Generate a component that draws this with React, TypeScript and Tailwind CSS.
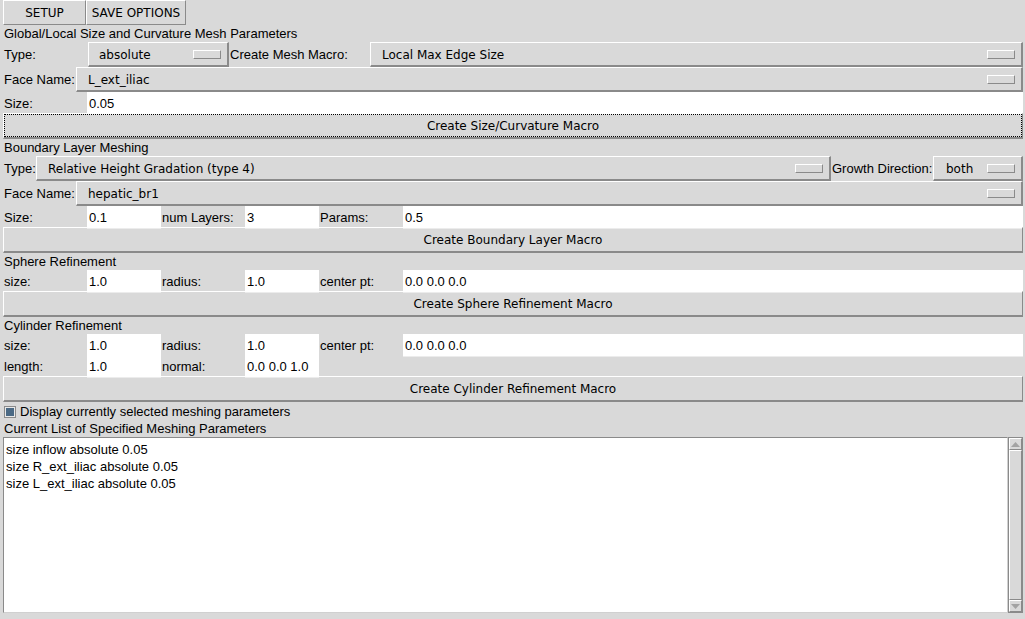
import React from "react";

const SANS = "font-['Liberation_Sans',Arial,sans-serif]";
const DEJAVU = "font-['DejaVu_Sans',sans-serif]";
const RAISED = "border border-t-white border-l-white border-r-[#8a8a8a] border-b-[#8a8a8a]";

function Indicator() {
  return <span className={`ml-auto mr-[6px] h-[9px] w-[28px] shrink-0 ${RAISED}`} />;
}

function MenuButton({ value, className = "", pad = "pl-[11px]" }: { value: string; className?: string; pad?: string }) {
  return (
    <div className={`flex h-full items-center bg-[#d9d9d9] ${RAISED} border-b-2 border-r-2 ${pad} ${DEJAVU} text-[12px] ${className}`}>
      <span className="whitespace-nowrap pt-[1px]">{value}</span>
      <Indicator />
    </div>
  );
}

function Label({ text, className = "" }: { text: string; className?: string }) {
  return <div className={`flex h-full items-center whitespace-nowrap pl-[1px] pt-[1px] text-[13px] ${className}`}>{text}</div>;
}

function Entry({ value }: { value: string }) {
  return (
    <div className="flex h-full items-center border-b border-[#ececec] bg-white pl-[2px] pt-[2px] text-[13px]">
      {value}
    </div>
  );
}

function BigButton({ text, focus = false }: { text: string; focus?: boolean }) {
  return (
    <div className={`relative flex h-[26px] items-center justify-center ${RAISED} border-b-2 ${DEJAVU} text-[12px]`}>
      {focus && <span className="pointer-events-none absolute inset-[0px] border border-dotted border-black" />}
      {text}
    </div>
  );
}

function Heading({ text }: { text: string }) {
  return <div className="h-[17px] pl-[1px] pt-[1px] text-[13px] leading-[16px]">{text}</div>;
}

function GridRow({ cells }: { cells: [string, string | null][] }) {
  return (
    <div className="grid h-[21px] grid-cols-[84px_74px_84px_74px_84px_1fr]">
      {cells.map(([label, value], i) => (
        <React.Fragment key={i}>
          <Label text={label} />
          {value === null ? <div /> : <Entry value={value} />}
        </React.Fragment>
      ))}
    </div>
  );
}

export default function App() {
  const items = ["size inflow absolute 0.05", "size R_ext_iliac absolute 0.05", "size L_ext_iliac absolute 0.05"];
  return (
    <div className={`h-[619px] w-[1025px] overflow-hidden bg-[#d9d9d9] text-black ${SANS}`}>
      <div className="flex h-full flex-col pl-[3px] pr-[2px]">
        {/* toolbar */}
        <div className={`flex h-[25px] ${DEJAVU} text-[12px]`}>
          <div className={`flex w-[83px] items-center justify-center ${RAISED}`}>SETUP</div>
          <div className={`flex w-[100px] items-center justify-center ${RAISED}`}>SAVE OPTIONS</div>
        </div>

        <Heading text="Global/Local Size and Curvature Mesh Parameters" />
        <div className="flex h-[25px]">
          <Label text="Type:" className="w-[85px]" />
          <MenuButton value="absolute" className="w-[141px]" pad="pl-[10px]" />
          <Label text="Create Mesh Macro:" className="w-[141px]" />
          <MenuButton value="Local Max Edge Size" className="flex-1" />
        </div>
        <div className="flex h-[25px]">
          <Label text="Face Name:" className="w-[73px]" />
          <MenuButton value="L_ext_iliac" className="flex-1" />
        </div>
        <div className="grid h-[21px] grid-cols-[84px_1fr]">
          <Label text="Size:" />
          <Entry value="0.05" />
        </div>
        <BigButton text="Create Size/Curvature Macro" focus />

        <Heading text="Boundary Layer Meshing" />
        <div className="flex h-[25px]">
          <Label text="Type:" className="w-[33px]" />
          <MenuButton value="Relative Height Gradation (type 4)" className="flex-1" />
          <Label text="Growth Direction:" className="w-[102px]" />
          <MenuButton value="both" className="w-[90px]" pad="pl-[12px]" />
        </div>
        <div className="flex h-[25px]">
          <Label text="Face Name:" className="w-[73px]" />
          <MenuButton value="hepatic_br1" className="flex-1" />
        </div>
        <GridRow cells={[["Size:", "0.1"], ["num Layers:", "3"], ["Params:", "0.5"]]} />
        <BigButton text="Create Boundary Layer Macro" />

        <Heading text="Sphere Refinement" />
        <GridRow cells={[["size:", "1.0"], ["radius:", "1.0"], ["center pt:", "0.0 0.0 0.0"]]} />
        <BigButton text="Create Sphere Refinement Macro" />

        <Heading text="Cylinder Refinement" />
        <GridRow cells={[["size:", "1.0"], ["radius:", "1.0"], ["center pt:", "0.0 0.0 0.0"]]} />
        <GridRow cells={[["length:", "1.0"], ["normal:", "0.0 0.0 1.0"], ["", null]]} />
        <BigButton text="Create Cylinder Refinement Macro" />

        <div className="flex h-[18px] items-center pl-[2px] pt-[1px] text-[13px]">
          <span className="mr-[5px] h-[10px] w-[10px] border border-[#e8e8e8] bg-[#4a6984] outline outline-1 outline-[#8a8a8a]" />
          Display currently selected meshing parameters
        </div>
        <Heading text="Current List of Specified Meshing Parameters" />

        <div className="flex h-[176px]">
          <div className="flex-1 border border-[#8a8a8a] border-b-[#d0d0d0] border-r-[#d0d0d0] bg-white pl-[2px] pt-[3px] text-[13px] leading-[17px]">
            {items.map((t) => (
              <div key={t}>{t}</div>
            ))}
          </div>
          <div className="flex w-[15px] flex-col border border-[#8a8a8a] bg-[#d9d9d9]">
            <div className={`flex h-[12px] items-center justify-center ${RAISED}`}>
              <svg width="9" height="5" viewBox="0 0 9 5"><path d="M4.5 0 L9 5 L0 5 Z" fill="#a3a3a3" /></svg>
            </div>
            <div className={`flex-1 ${RAISED}`} />
            <div className={`flex h-[12px] items-center justify-center ${RAISED}`}>
              <svg width="9" height="5" viewBox="0 0 9 5"><path d="M0 0 L9 0 L4.5 5 Z" fill="#a3a3a3" /></svg>
            </div>
          </div>
        </div>
      </div>
    </div>
  );
}
